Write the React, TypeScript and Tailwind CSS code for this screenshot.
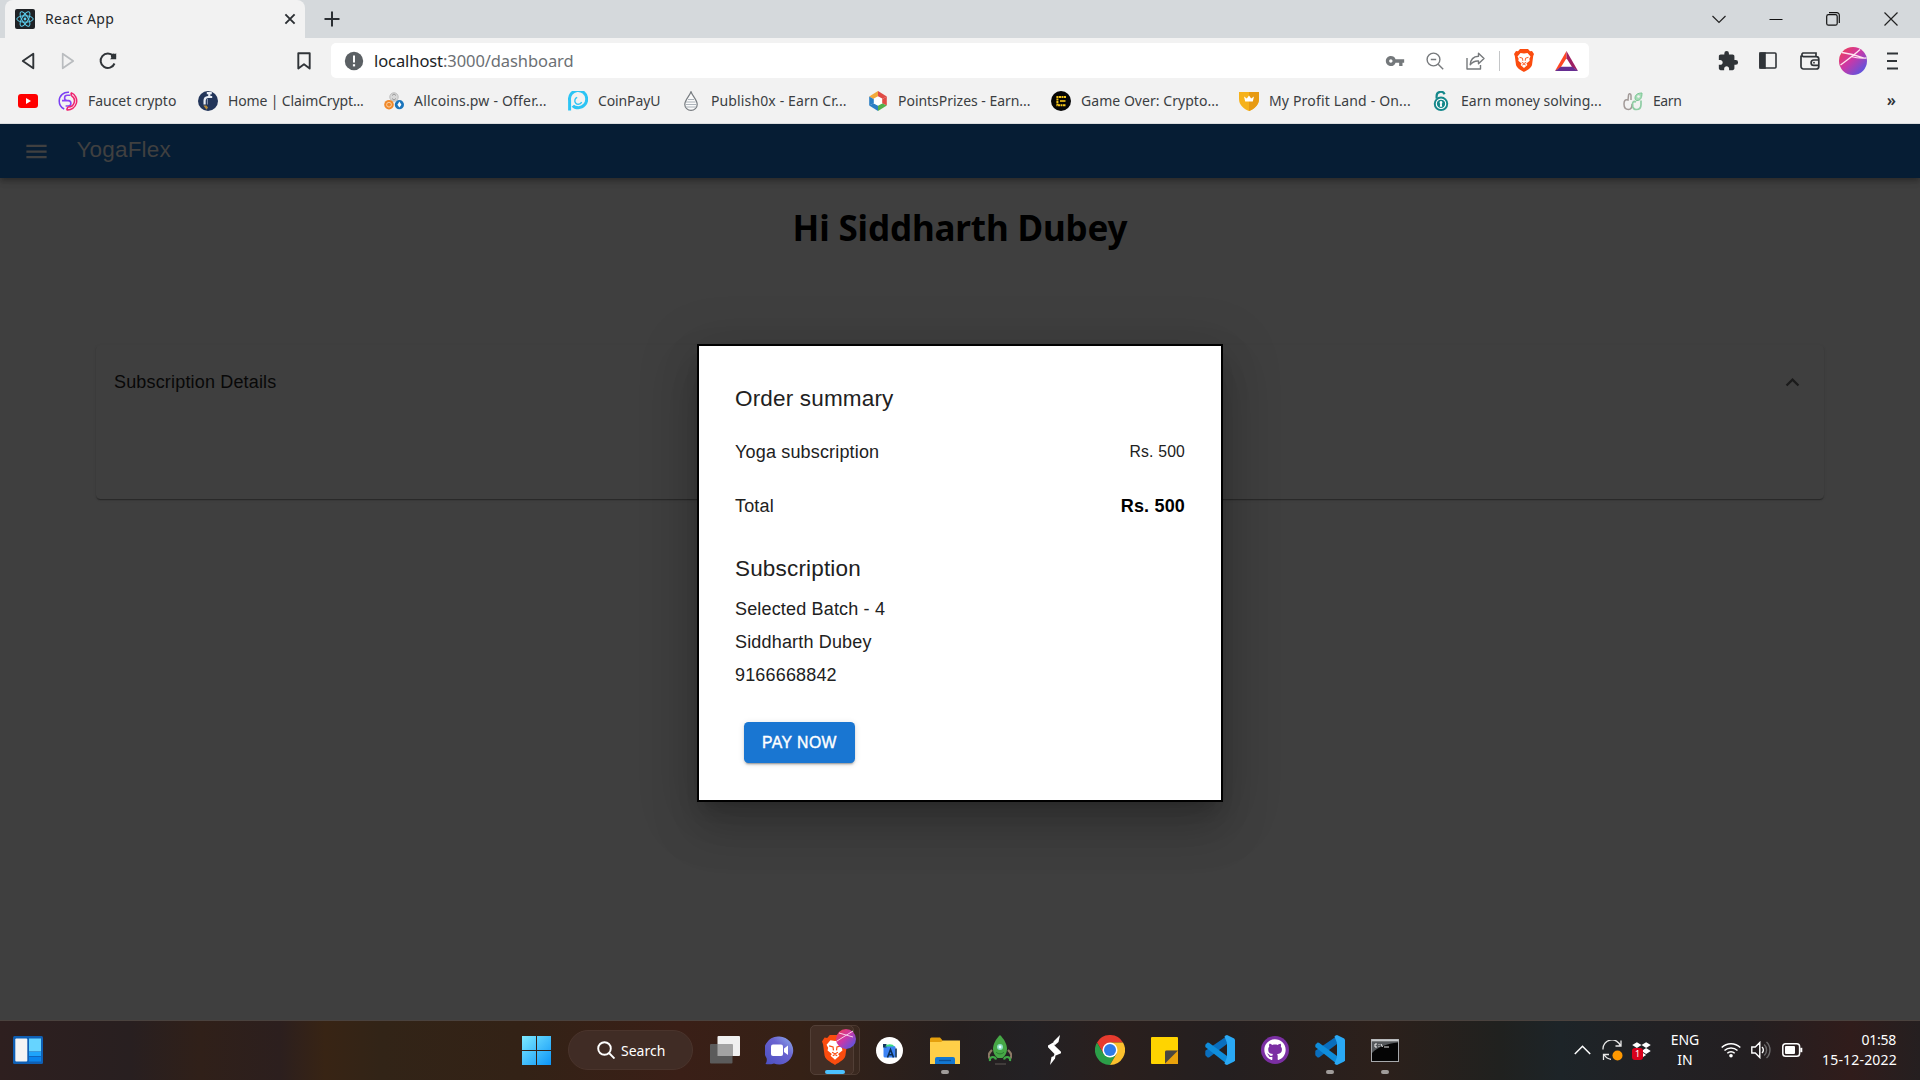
import type { ReactNode } from "react";
import { MdVpnKey, MdExtension, MdMenu, MdExpandLess } from "react-icons/md";
import { FaGithub, FaDropbox } from "react-icons/fa";

type Mark = { label: string; text: string; box: string; icon: ReactNode };

function ReactFavicon() {
  return (
    <svg className="h-5 w-5" viewBox="0 0 20 20" fill="none" stroke="#5ccfee" strokeWidth="1">
      <rect width="20" height="20" rx="2" fill="#1f2226" stroke="none" />
      <ellipse cx="10" cy="10" rx="8.2" ry="3.2" />
      <ellipse cx="10" cy="10" rx="8.2" ry="3.2" transform="rotate(60 10 10)" />
      <ellipse cx="10" cy="10" rx="8.2" ry="3.2" transform="rotate(120 10 10)" />
      <circle cx="10" cy="10" r="1.4" fill="#5ccfee" stroke="none" />
    </svg>
  );
}

function Lion({ size }: { size: string }) {
  return (
    <svg className={"shrink-0 " + size} viewBox="0 0 20 23">
      <path d="M6 0h8l2 2.200 2-.3L20 5l-.8 2L18 16c-.8 3-4.500 5-8 7-3.500-2-7.200-4-8-7L.8 7 0 5l2-3.100 2 .3z" fill="#fb4c0f" />
      <path d="M10 4.500 13.500 4l3 3.500-1.200 2.300.4 2-3.300 2.700 1 1.500L10 19l-3.400-3 1-1.500-3.300-2.700.4-2L3.500 7.500l3-3.500z" fill="#fff" />
      <path d="M5.500 8.300l3 .9.3 2.600M14.500 8.300l-3 .9-.3 2.600M7.800 13.300 10 14.500l2.200-1.200M8.300 16l1.700-1 1.700 1" fill="none" stroke="#fb4c0f" strokeWidth=".9" />
    </svg>
  );
}

function Svg20({ children }: { children: ReactNode }) {
  return (
    <svg className="h-5 w-5 shrink-0" viewBox="0 0 20 20" fill="none">
      {children}
    </svg>
  );
}

const marks: Mark[] = [
  {
    label: "Faucet crypto",
    text: "tracking-[-0.003em]",
    box: "w-[140px]",
    icon: (
      <Svg20>
        <path d="M11 1.2A8.9 8.9 0 0 0 1.2 10a8.8 8.8 0 0 0 5 8" stroke="#7a3ff2" strokeWidth="1.5" />
        <path d="M12.5 4.3H9.2a2.6 2.6 0 0 0 0 5.2h2.2M4 9.6h6.2a2.7 2.7 0 0 1 0 5.4H7.6" stroke="#8a45f5" strokeWidth="1.6" />
        <path d="M13 1.6A9 9 0 0 1 8.6 18.9M13.4 4.6a6.2 6.2 0 0 1-3.6 11.5M13 1.6l.4 3M8.6 18.9l1.2-2.8" stroke="#f0246e" strokeWidth="1.5" />
      </Svg20>
    ),
  },
  {
    label: "Home | ClaimCrypt...",
    text: "tracking-[-0.01em]",
    box: "w-[186px]",
    icon: (
      <Svg20>
        <circle cx="10" cy="10" r="10" fill="#22355a" />
        <path d="M8.8 2.2h5M11.3 2.2v3M14.2 6H10a3.6 3.6 0 0 0-3.4 3.6v4" stroke="#e8edf5" strokeWidth="2.2" />
        <path d="M5.4 14.6h3l1.6 2-1.5 2.2z" fill="#b58a3a" />
        <path d="M9.4 8v5.5" stroke="#8d9ab5" />
      </Svg20>
    ),
  },
  {
    label: "Allcoins.pw - Offer...",
    text: "tracking-[0.014em]",
    box: "w-[184px]",
    icon: (
      <Svg20>
        <circle cx="10" cy="6" r="4.2" fill="#d9d9d9" stroke="#bdbdbd" />
        <path d="M8 4.5 10 3l2 1.5M8 7.5 10 9l2-1.5" stroke="#9a9a9a" />
        <circle cx="5" cy="13.7" r="4.8" fill="#f0892b" />
        <circle cx="5" cy="13.7" r="2.4" stroke="#fbd1a2" />
        <circle cx="15.4" cy="13.7" r="4.6" fill="#1b75bc" />
        <path d="m15.4 10.6 2 3.2-2 2.8-2-2.8z" fill="#fff" />
      </Svg20>
    ),
  },
  {
    label: "CoinPayU",
    text: "tracking-[-0.009em]",
    box: "w-[113px]",
    icon: (
      <Svg20>
        <path d="M1.6 19.4V9.5a8.600 8.600 0 1 1 8.800 7.200c-2.600 0-4.600-.8-5.600-2" stroke="#2cc4f4" strokeWidth="3" />
        <path d="M9.200 6.400a3.500 3.500 0 1 0 4.400 4.500" stroke="#2cc4f4" strokeWidth="1.400" />
      </Svg20>
    ),
  },
  {
    label: "Publish0x - Earn Cr...",
    text: "tracking-[0.009em]",
    box: "w-[187px]",
    icon: (
      <Svg20>
        <path d="M10 .8C8.600 5 3.800 9 3.800 13.400a6.200 6 0 0 0 12.400 0C16.200 9 11.400 5 10 .8z" stroke="#777c80" strokeWidth="1.200" fill="#fafafa" />
        <path d="M7 8.500h6M5 11h9.500M4.500 13.500h11M5 16h10" stroke="#a4acb3" strokeWidth=".9" />
      </Svg20>
    ),
  },
  {
    label: "PointsPrizes - Earn...",
    text: "tracking-[-0.002em]",
    box: "w-[183px]",
    icon: (
      <Svg20>
        <path d="M10 0v6L6 8.200l-4.800-2.700z" fill="#f2a93b" />
        <path d="M10 0v6l4 2.200 4.800-2.700z" fill="#e04b45" />
        <path d="M18.800 5.500v9l-4.800-2.300V8.200z" fill="#e04b45" />
        <path d="M18.800 14.500 10 20v-5.800l4-2z" fill="#52b04b" />
        <path d="M1.200 14.500 10 20v-5.800l-4-2z" fill="#2b7fc4" />
        <path d="M1.200 5.500v9l4.800-2.300V8.200z" fill="#2b7fc4" />
        <path d="m10 5.200 4.200 2.400v4.800L10 14.800l-4.200-2.400V7.600z" fill="#fff" />
      </Svg20>
    ),
  },
  {
    label: "Game Over: Crypto...",
    text: "tracking-[0.003em]",
    box: "w-[188px]",
    icon: (
      <Svg20>
        <circle cx="10" cy="10" r="10" fill="#060606" />
        <path d="M15 6H6.400v8.300H15" stroke="#f5c518" strokeWidth="2" strokeDasharray="2 .5" />
        <path d="M9 10h5.500" stroke="#f5c518" strokeWidth="1.600" />
      </Svg20>
    ),
  },
  {
    label: "My Profit Land - On...",
    text: "tracking-[0.012em]",
    box: "w-[192px]",
    icon: (
      <Svg20>
        <path d="M0 1h20v7c0 6-5 10-10 12C5 18 0 14 0 8z" fill="#f6b21c" />
        <path d="M10 1h10v7c0 6-5 10-10 12z" fill="#e79a12" />
        <path d="m5 5.500 2.800 2L10 4.500l2.200 3 2.800-2-1.200 5H6.200z" fill="#fff" />
      </Svg20>
    ),
  },
  {
    label: "Earn money solving...",
    text: "tracking-[0.001em]",
    box: "w-[192px]",
    icon: (
      <Svg20>
        <path d="M5.600 7.500V5a4.200 4.200 0 0 1 8-1.800" stroke="#15888b" strokeWidth="2.200" />
        <circle cx="10" cy="12.800" r="7.200" fill="#15888b" />
        <circle cx="10" cy="12.800" r="4.700" stroke="#fff" strokeWidth="1.100" />
        <path d="M10 10a1.500 1.500 0 0 1 .8 2.700l.4 3H8.800l.4-3A1.500 1.500 0 0 1 10 10z" fill="#fff" />
      </Svg20>
    ),
  },
  {
    label: "Earn",
    text: "tracking-[-0.03em]",
    box: "w-[80px]",
    icon: (
      <Svg20>
        <path d="M8 9V4.500C8 2.500 5.500 2 5.500 4.500L5 9C2 8 1 10 1 13c0 4 2 5.500 4.500 5.500S9 16 9 13" stroke="#a29a98" strokeWidth="1.500" />
        <path d="M9.500 15c.5 2.500 2 3.500 4 3.500 3 0 4.500-2 4.500-5V9.500M10 15c-1.500-3 .5-5.500 3-4" stroke="#8fcda4" strokeWidth="1.700" />
        <path d="M12 7c0-3.500 3-5 7-5 0 5-1.500 7.500-5 7.500-1.300 0-2-1-2-2.500z" fill="#a5dcb6" stroke="#7cc795" />
        <circle cx="15.500" cy="5.500" r="1.300" fill="#f2f2f2" />
      </Svg20>
    ),
  },
];

function TabStrip() {
  return (
    <div className="flex h-[38px] bg-[#d5d9dc] pl-[5px]">
      <div className="flex h-[38px] w-[300px] items-center rounded-t-[8px] bg-[#f2f2f2] pl-[10px]">
        <ReactFavicon />
        <span className="ml-[10px] flex-1 pb-[2px] text-[14px] tracking-[0.025em] text-[#25282b]">React App</span>
        <svg className="mr-[9px] h-3 w-3" viewBox="0 0 12 12" stroke="#2b2f33" strokeWidth="1.900">
          <path d="m1.400 1.400 9.200 9.200M10.600 1.400l-9.200 9.200" />
        </svg>
      </div>
      <svg className="mt-[11px] ml-[19px] h-4 w-4" viewBox="0 0 16 16" stroke="#2b2f33" strokeWidth="2">
        <path d="M8 .5v15M.5 8h15" />
      </svg>
      <div className="ml-auto flex h-[37px] items-center">
        <svg className="mr-[43px] h-[14px] w-[14px]" viewBox="0 0 14 14" fill="none" stroke="#222" strokeWidth="1.200">
          <path d="m.5 4 6.500 6.500L13.500 4" />
        </svg>
        <svg className="mr-[43px] h-[14px] w-[14px]" viewBox="0 0 14 14" stroke="#111" strokeWidth="1">
          <path d="M.5 7.500h13" />
        </svg>
        <svg className="mr-[44px] h-[14px] w-[14px]" viewBox="0 0 14 14" fill="none" stroke="#111" strokeWidth="1.200">
          <rect x=".7" y="2.700" width="10.500" height="10.500" rx="1.800" />
          <path d="M3 .7h7.800a2.500 2.500 0 0 1 2.500 2.500V11" />
        </svg>
        <svg className="mr-[22px] h-[14px] w-[14px]" viewBox="0 0 14 14" stroke="#222" strokeWidth="1.200">
          <path d="m.5.500 13 13M13.500.500l-13 13" />
        </svg>
      </div>
    </div>
  );
}

function Toolbar() {
  return (
    <div className="flex h-[41px] items-center bg-[#f2f2f2] pt-[4px]">
      <svg className="ml-[21px] h-[18px] w-[14px]" viewBox="0 0 14 18" fill="none" stroke="#303438" strokeWidth="1.900" strokeLinejoin="round">
        <path d="M12.300 1.700v14.600L1.800 9z" />
      </svg>
      <svg className="ml-[26px] h-[18px] w-[14px]" viewBox="0 0 14 18" fill="none" stroke="#b9bcbf" strokeWidth="1.700" strokeLinejoin="round">
        <path d="M1.700 1.700v14.600L12.200 9z" />
      </svg>
      <svg className="ml-[24px] h-[18px] w-[18px]" viewBox="0 0 18 18" fill="none" stroke="#303438" strokeWidth="2">
        <path d="M15.500 11.500a7.200 7.200 0 1 1-1.200-7.400" />
        <path d="M17.200 1v6.200H11z" fill="#303438" stroke="none" />
        <circle cx="14.500" cy="4" r="2.600" fill="#303438" stroke="none" />
      </svg>
      <svg className="ml-[180px] h-[18px] w-[14px]" viewBox="0 0 14 18" fill="none" stroke="#303438" strokeWidth="1.900" strokeLinejoin="round">
        <path d="M1.300 1.200h11.400v15.300L7 12.200l-5.700 4.300z" />
      </svg>

      <div className="ml-[20px] flex h-[35px] w-[1258px] items-center rounded-[5px] bg-white pl-[13px]">
        <svg className="h-5 w-5" viewBox="0 0 20 20">
          <circle cx="10" cy="10" r="9.200" fill="#5b6064" />
          <path d="M10 4.500v7" stroke="#fff" strokeWidth="2" />
          <path d="M10 13.200v2.200" stroke="#fff" strokeWidth="2.200" />
        </svg>
        <span className="ml-[10px] flex-1 text-[16.500px] leading-[22px] tracking-[-0.005em] text-[#6c7074]">
          <span className="text-[#202326]">localhost</span>:3000/dashboard
        </span>
        <MdVpnKey className="mr-[21px] h-5 w-5 text-[#74787b]" />
        <svg className="mr-[22px] h-[18px] w-[18px]" viewBox="0 0 18 18" fill="none" stroke="#76797c" strokeWidth="1.400">
          <circle cx="7.500" cy="7.500" r="6.400" />
          <path d="m12.200 12.200 5 5M4.800 7.500h5.400" />
        </svg>
        <svg className="mr-[14px] h-[18px] w-[19px]" viewBox="0 0 19 18" fill="none" stroke="#76797c" strokeWidth="1.400" strokeLinejoin="round">
          <path d="M1 6v11h13.500v-4" />
          <path d="M12.500 1.200 18 6.500l-5.500 5.300V9c-3.800-.3-6 .8-8.300 3.800.3-5 3.300-8.400 8.300-8.600z" />
        </svg>
        <span className="mr-[14px] h-5 w-px bg-[#c4c6c8]" />
        <span className="mr-[21px] flex">
          <Lion size="h-[23px] w-[20px]" />
        </span>
        <svg className="mr-[11px] h-5 w-[23px]" viewBox="0 0 23 20">
          <path d="M11.500 0 0 20l5.800-3.800 5.700-9z" fill="#ff4724" />
          <path d="M11.500 0 23 20l-5.800-3.800-5.700-9z" fill="#9e1f63" />
          <path d="M0 20h23l-5.800-4.200H5.800z" fill="#662d91" />
        </svg>
      </div>

      <MdExtension className="ml-[128px] h-[22px] w-[22px] text-[#303438]" />
      <svg className="ml-[20px] h-[17px] w-[18px]" viewBox="0 0 18 17" fill="none" stroke="#303438" strokeWidth="1.600">
        <rect x="1" y="1" width="16" height="15" rx="1" />
        <path d="M1 1h5v15H1z" fill="#303438" />
      </svg>
      <svg className="ml-[23px] h-[18px] w-[20px]" viewBox="0 0 20 18" fill="none" stroke="#303438" strokeWidth="1.700">
        <path d="M1 3.500v10.800A2.500 2.500 0 0 0 3.500 17h12.800a2.500 2.500 0 0 0 2.500-2.500V7A2.500 2.500 0 0 0 16.300 4.600H3A2 2 0 0 1 3 1h13v3.500" />
        <path d="M18.800 8h-5a2.600 2.600 0 0 0 0 5.400h5" />
        <circle cx="14" cy="10.700" r=".9" fill="#303438" stroke="none" />
      </svg>
      <svg className="ml-[19px] h-[28px] w-[28px]" viewBox="0 0 28 28" fill="none">
        <defs>
          <linearGradient id="avatar" x1="0" y1="0" x2="1" y2="1">
            <stop offset="0" stopColor="#f2404a" />
            <stop offset=".45" stopColor="#cc37a6" />
            <stop offset="1" stopColor="#3b5df0" />
          </linearGradient>
        </defs>
        <circle cx="14" cy="14" r="14" fill="url(#avatar)" />
        <path d="M3 5.500c7 1 14 2.500 22 5.500M1.500 18C8 13 14 9 21 2.500M12 9.500c5 1.500 10 2 15.500 1.500" stroke="#ffe3ef" strokeWidth="1.300" />
      </svg>
      <svg className="ml-[19px] h-[18px] w-[13px]" viewBox="0 0 13 18" stroke="#303438" strokeWidth="1.800">
        <path d="M1 1.500h11M1 9h10M1 16.500h11" />
      </svg>
    </div>
  );
}

function Bookmarks() {
  return (
    <div className="flex h-[45px] items-center border-b border-[#dadcde] bg-[#f2f2f2] pl-[18px]">
      <svg className="mr-[20px] h-[14px] w-5" viewBox="0 0 20 14">
        <rect width="20" height="14" rx="3" fill="#f00" />
        <path d="M8 4v6l5-3z" fill="#fff" />
      </svg>
      {marks.map((m) => (
        <div key={m.label} className={"flex shrink-0 items-center gap-[10px] " + m.box}>
          {m.icon}
          <span className={"text-[14px] leading-5 whitespace-nowrap text-[#3b3e42] " + m.text}>{m.label}</span>
        </div>
      ))}
      <span className="mr-[24px] mb-[3px] ml-auto text-[16px] leading-5 font-semibold text-[#303438]">»</span>
    </div>
  );
}

function OrderDialog() {
  return (
    <div className="absolute top-[220px] left-[697px] h-[458px] w-[526px] border-2 border-black bg-white p-9 text-[18px] leading-[27px] tracking-[0.00938em] text-[#212121] shadow-[0_12px_17px_-8px_rgba(0,0,0,0.2),0_27px_43px_3px_rgba(0,0,0,0.14),0_10px_52px_9px_rgba(0,0,0,0.12)]">
      <h2 className="-mt-px text-[22.500px] leading-9 tracking-[0.0075em]">Order summary</h2>
      <div className="mt-[8px] flex h-[54px] items-center justify-between">
        <span>Yoga subscription</span>
        <span className="pb-[2px] text-[15.750px] tracking-[0.01071em]">Rs. 500</span>
      </div>
      <div className="flex h-[54px] items-center justify-between">
        <span>Total</span>
        <span className="font-bold text-black">Rs. 500</span>
      </div>
      <h2 className="mt-[18px] mb-[9px] text-[22.500px] leading-9 tracking-[0.0075em]">Subscription</h2>
      <div className="flex flex-col gap-[6px]">
        <p>Selected Batch - 4</p>
        <p>Siddharth Dubey</p>
        <p>9166668842</p>
      </div>
      <button className="mt-[33px] ml-[9px] block h-[41px] w-[111px] rounded-[4.500px] bg-[#1976d2] text-[15.750px] font-medium tracking-[0.02857em] text-white shadow-[0_3px_1px_-2px_rgba(0,0,0,0.2),0_2px_2px_rgba(0,0,0,0.14),0_1px_6px_rgba(0,0,0,0.12)] [-webkit-text-stroke:0.4px_white]">
        PAY NOW
      </button>
    </div>
  );
}

function Page() {
  return (
    <main className="relative h-[896px] overflow-hidden bg-[#3f3f3f] font-['Liberation_Sans',Arial,sans-serif]">
      <header className="relative flex h-[54px] items-center bg-[#061d34] pb-px pl-[23px] shadow-[0_2px_5px_-1px_rgba(0,0,0,0.2),0_4px_6px_rgba(0,0,0,0.14),0_1px_11px_rgba(0,0,0,0.12)]">
        <MdMenu className="mt-[1px] h-[27px] w-[27px] text-[#404040]" />
        <span className="ml-[26.500px] pb-px text-[22.500px] leading-9 tracking-[0.0075em] text-[#404040]">YogaFlex</span>
      </header>
      <h1 className="mt-[24px] text-center font-['Noto_Sans',sans-serif] text-[35px] leading-[52px] font-bold tracking-[-0.004em] text-black">
        Hi Siddharth Dubey
      </h1>
      <section className="mx-24 mt-[91px] h-[154px] rounded-[4.500px] px-[18px] pt-[24px] shadow-[0_2px_1px_-1px_rgba(0,0,0,0.2),0_1px_1px_rgba(0,0,0,0.14),0_1px_3px_rgba(0,0,0,0.12)]">
        <div className="flex h-[27px] items-center justify-between text-[18px] tracking-[0.00938em] text-[#080808]">
          Subscription Details
          <MdExpandLess className="h-[27px] w-[27px] text-[#1b1b1b]" />
        </div>
      </section>
      <OrderDialog />
    </main>
  );
}

function VsCode() {
  return (
    <svg className="h-[30px] w-[30px]" viewBox="0 0 30 30">
      <path d="M22 1 4.500 17.200 1.800 19.200.3 18.300V15.800z" fill="#0a6ebd" />
      <path d="M22 1v8L4 22.400l-1.400.2L.3 20.300v-2z" fill="#0a6ebd" />
      <path d="M22 29v-8L4 7.800l-1.400-.3L.3 9.700v2.200z" fill="#0f8ddb" />
      <path d="M22 0v30l7.200-3.500.8-1.200V4.700l-.8-1.200z" fill="#2aa9f5" />
      <path d="M22 0c-1 0-2 .8-2.500 1.500L22 8z" fill="#2aa9f5" />
      <path d="M22 30c-1 0-2-.8-2.500-1.500L22 22z" fill="#2aa9f5" />
    </svg>
  );
}

function Slot({ children, dot }: { children: ReactNode; dot?: boolean }) {
  return (
    <div className="relative flex h-[59px] w-[55px] shrink-0 items-center justify-center">
      {children}
      {dot && <span className="absolute bottom-[6px] left-6 h-1 w-2 rounded-full bg-[#a09c9a]" />}
    </div>
  );
}

function Taskbar() {
  return (
    <footer className="flex h-[60px] items-center border-t border-[#4a423e] bg-[linear-gradient(90deg,#2e1f1f_0px,#281f20_130px,#302019_200px,#2c1f1e_280px,#382414_325px,#322417_380px,#332216_520px,#3a1f17_680px,#352116_800px,#251f1f_960px,#232124_1030px,#2a1f1d_1120px,#241f20_1220px,#2c201b_1380px,#20211f_1500px,#1d2428_1560px,#222124_1660px,#231f21_1750px,#301c1b_1850px,#251f20_1920px)] pb-px text-white">
      <svg className="ml-[13px] h-[28px] w-[30px]" viewBox="0 0 30 28">
        <rect width="30" height="28" rx="1.500" fill="#0f5fb4" />
        <rect x="2.300" y="2.500" width="12" height="23" rx="1" fill="#f4f4f4" />
        <rect x="16" y="2.500" width="12" height="13" fill="#66d4ff" />
        <rect x="16" y="16" width="12" height="4" fill="#1ea4fb" />
        <rect x="16" y="20.800" width="12" height="4.700" fill="#0a84ec" />
      </svg>
      <svg className="ml-[479px] h-[29px] w-[29px]" viewBox="0 0 29 29">
        <defs>
          <linearGradient id="win" gradientUnits="userSpaceOnUse" x1="0" y1="0" x2="29" y2="29">
            <stop offset="0" stopColor="#7deaff" />
            <stop offset="1" stopColor="#0c95f8" />
          </linearGradient>
        </defs>
        <path d="M0 0h14v14H0zM15 0h14v14H15zM0 15h14v14H0zM15 15h14v14H15z" fill="url(#win)" />
      </svg>
      <div className="ml-[17px] flex h-10 w-[125px] items-center rounded-full border border-[#4a342c] bg-[#402c25] pl-[28px]">
        <svg className="h-[18px] w-[18px]" viewBox="0 0 18 18" fill="none" stroke="#fff" strokeWidth="1.900">
          <circle cx="7.500" cy="7.500" r="6.300" />
          <path d="m12 12 5.500 5.500" />
        </svg>
        <span className="ml-[6px] text-[14px]">Search</span>
      </div>
      <div className="ml-[4px] flex">
        <Slot>
          <svg className="h-[28px] w-[30px]" viewBox="0 0 30 28">
            <rect x="7.500" width="22.500" height="20" rx="1" fill="#f0f0f0" />
            <rect y="8" width="22.500" height="19.500" rx="1" fill="#5b5b5b" />
            <rect x="7.500" y="8" width="15" height="12" fill="#a3a3a3" />
          </svg>
        </Slot>
        <Slot>
          <svg className="h-[29px] w-[29px]" viewBox="0 0 29 29">
            <defs>
              <linearGradient id="chat" x1="0" y1="1" x2="1" y2="0">
                <stop offset="0" stopColor="#4a4fc0" />
                <stop offset=".6" stopColor="#6a63d0" />
                <stop offset="1" stopColor="#8fb2f0" />
              </linearGradient>
            </defs>
            <path d="M14.500.5a14 14 0 1 1-5.500 27c-3 1-6 1-8.500.5 1.400-2 1.600-4 1-6A14 14 0 0 1 14.500.5z" fill="url(#chat)" />
            <rect x="6" y="8.500" width="12" height="11.500" rx="2" fill="#fff" />
            <path d="m19 12.500 4-3v9.500l-4-3z" fill="#fff" />
          </svg>
        </Slot>
        <Slot>
          <span className="absolute top-[4px] left-[4px] h-[50px] w-[49px] rounded-[5px] border border-[#4c3a31] bg-[#39281f]" />
          <span className="absolute top-[4px] left-[3px] h-[50px] w-[44px] rounded-[5px] border border-[#523f36] bg-[#422e25]" />
          <span className="relative flex">
            <Lion size="h-[30px] w-[26px]" />
          </span>
          <svg className="absolute top-[8px] left-[29px] h-5 w-5" viewBox="0 0 20 20" fill="none">
            <circle cx="10" cy="10" r="10" fill="url(#avatar)" />
            <path d="M3 4l14 4M1 12 17 2" stroke="#f6cfe8" />
          </svg>
          <span className="absolute bottom-[6px] left-[18px] h-1 w-5 rounded-full bg-[#4cc2ff]" />
        </Slot>
        <Slot>
          <svg className="h-[27px] w-[27px]" viewBox="0 0 27 27">
            <circle cx="13.500" cy="13.500" r="13.500" fill="#fff" />
            <rect x="7.500" y="9" width="12" height="11.500" rx="1.500" fill="#3c83f5" />
            <path d="M7 7h3.500v3.500H7z" fill="#12375f" />
            <path d="M9 9.500a5.200 4 0 0 1 9.500 0z" fill="#3ddc84" />
            <path d="m11.500 20.500 3-8 3 8M12.800 17.800h3.400M20 11.500v9" fill="none" stroke="#0d2f55" strokeWidth="1.600" />
          </svg>
        </Slot>
        <Slot dot>
          <svg className="h-[27px] w-[30px]" viewBox="0 0 30 27">
            <path d="M0 2a1.500 1.500 0 0 1 1.500-1.500H10L13 4v5H0z" fill="#e5a00d" />
            <path d="M0 5h11l2-1.500h17V27H0z" fill="#ffcf48" />
            <path d="M5 27v-5a2 2 0 0 1 2-2h16a2 2 0 0 1 2 2v5z" fill="#1377d1" />
            <path d="M9 23.500h12" stroke="#0c4f94" strokeWidth="1.300" />
          </svg>
        </Slot>
        <Slot>
          <svg className="h-[30px] w-[24px]" viewBox="0 0 24 30" fill="none">
            <path d="M4 15c-4 4-4 6-2 9M20 15c4 4 4 6 2 9" stroke="#8c7a66" strokeWidth="2.200" />
            <path d="M12 0C8 4 5 9 5 14c0 4 2 7 4.500 9h5c2.500-2 4.500-5 4.500-9 0-5-3-10-7-14z" fill="#46a746" />
            <path d="M2 26c-1-5 5-5 6-1.500M22 26c1-5-5-5-6-1.500" stroke="#3fa746" strokeWidth="2.200" />
            <path d="M8 17c2 2.500 6 2.500 8 0" stroke="#2b7a31" />
            <circle cx="12" cy="12" r="3" fill="#8bdcc4" />
            <circle cx="12" cy="12" r="1.400" fill="#e8fffa" />
            <path d="M7 29h11" stroke="#4b4644" strokeWidth="1.500" />
          </svg>
        </Slot>
        <Slot>
          <svg className="h-[30px] w-[15px]" viewBox="0 0 15 30" fill="#fff">
            <path d="M7 7 1 10.500v1.800L7.500 19l-1 2.500L14 18.200v-1.400L7.500 10.500z" />
            <path d="M13 0 6.500 6.500 7.500 10.500 11.500 7z" />
            <path d="m3 30 5-6.500.5-3-4 1.500z" />
          </svg>
        </Slot>
        <Slot>
          <svg className="h-[30px] w-[30px]" viewBox="0 0 30 30">
            <path d="M2 7.500A15 15 0 0 1 28 7.500H15l-6.500 11.200z" fill="#e63b2e" />
            <path d="M2 7.500A15 15 0 0 0 15 30l6.500-11.300h-13z" fill="#2b9e48" />
            <path d="M28 7.500A15 15 0 0 1 15 30l6.500-11.300L15 7.500z" fill="#fbc02d" />
            <circle cx="15" cy="15" r="7.500" fill="#fff" />
            <circle cx="15" cy="15" r="6" fill="#2f7be8" />
          </svg>
        </Slot>
        <Slot>
          <svg className="h-[27px] w-[27px]" viewBox="0 0 27 27">
            <rect width="27" height="27" rx="1" fill="#ffd400" />
            <path d="M14 13.500h13V27H14z" fill="#e9a20c" />
            <path d="M14 15a1.500 1.500 0 0 1 1.500-1.500H27L14 26.500z" fill="#4a4640" />
          </svg>
        </Slot>
        <Slot>
          <VsCode />
        </Slot>
        <Slot>
          <span className="flex h-7 w-7 items-center justify-center rounded-full bg-[#7b2fa3]">
            <FaGithub className="h-[22px] w-[22px] text-white" />
          </span>
        </Slot>
        <Slot dot>
          <VsCode />
        </Slot>
        <Slot dot>
          <svg className="h-[23px] w-[28px]" viewBox="0 0 28 23">
            <rect x=".5" y=".5" width="27" height="22" fill="#050505" stroke="#a7a9ac" />
            <path d="M1 2.500h26v1C16 4.500 7 8 1 14z" fill="#55585b" />
            <path d="M.5.500h27v2H.5z" fill="#c8cacc" />
            <path d="M6 5H4v3h2M8 5v.8M8 7.200V8M10 5l1.500 3M13 8h5" stroke="#fff" fill="none" strokeWidth=".9" />
          </svg>
        </Slot>
      </div>
      <div className="ml-auto flex h-full items-center">
        <svg className="mr-[11px] h-[10px] w-[17px]" viewBox="0 0 17 10" fill="none" stroke="#fff" strokeWidth="1.500">
          <path d="m.8 9 7.700-7.700L16.200 9" />
        </svg>
        <svg className="mr-[9px] h-[21px] w-[21px]" viewBox="0 0 21 21" fill="none" stroke="#e8e8e8" strokeWidth="1.300">
          <path d="M1 9.500A9 9 0 0 1 18.500 6M19 .5V6h-5.500M9 19.300A9 9 0 0 1 2.300 15M1.500 20v-5.500H7" />
          <circle cx="15.500" cy="15.500" r="5" fill="#ff9800" stroke="none" />
        </svg>
        <span className="relative mr-[19px] flex h-[19px] w-[19px] items-start">
          <FaDropbox className="h-[18px] w-[19px] text-white" />
          <span className="absolute top-[7px] left-0 flex h-[12px] w-[11px] items-center justify-center rounded-[3px] bg-[#d9001b] text-[9px] leading-none">1</span>
        </span>
        <span className="mr-[21px] w-[30px] text-center text-[14px] leading-[20px]">ENG IN</span>
        <svg className="mr-[10px] h-[16px] w-[20px]" viewBox="0 0 20 16" fill="none" stroke="#fff" strokeWidth="1.500">
          <path d="M.7 5.500a13.500 13.500 0 0 1 18.600 0M3.500 8.500a9.500 9.500 0 0 1 13 0M6.300 11.300a5.500 5.500 0 0 1 7.400 0" />
          <circle cx="10" cy="13.800" r="1.800" fill="#fff" stroke="none" />
        </svg>
        <svg className="mr-[11px] h-[18px] w-[20px]" viewBox="0 0 20 18" fill="none" stroke="#fff" strokeWidth="1.400">
          <path d="M.8 6h3.500l4.500-4.500v15L4.300 12H.8zM11 6a4 4 0 0 1 0 6" />
          <path d="M13.200 3.500a7.500 7.500 0 0 1 0 11M15.500 1a11 11 0 0 1 0 16" stroke="#6d6b6c" />
        </svg>
        <svg className="mr-[19px] h-[14px] w-[21px]" viewBox="0 0 21 14" fill="none" stroke="#fff" strokeWidth="1.500">
          <rect x=".8" y=".8" width="16.800" height="12.400" rx="2.800" />
          <rect x="3" y="3" width="10" height="8" rx="1" fill="#fff" stroke="none" />
          <path d="M19.300 4.800v4.400" strokeWidth="2" />
        </svg>
        <span className="mr-[24px] w-[74px] text-right text-[14px] leading-[20px] whitespace-nowrap">
          <span className="tracking-[-0.02em]">01:58</span>
          <br />
          <span className="tracking-[0.013em]">15-12-2022</span>
        </span>
      </div>
    </footer>
  );
}

export default function App() {
  return (
    <div className="h-[1080px] w-[1920px] overflow-hidden font-['Noto_Sans',sans-serif]">
      <TabStrip />
      <Toolbar />
      <Bookmarks />
      <Page />
      <Taskbar />
    </div>
  );
}
